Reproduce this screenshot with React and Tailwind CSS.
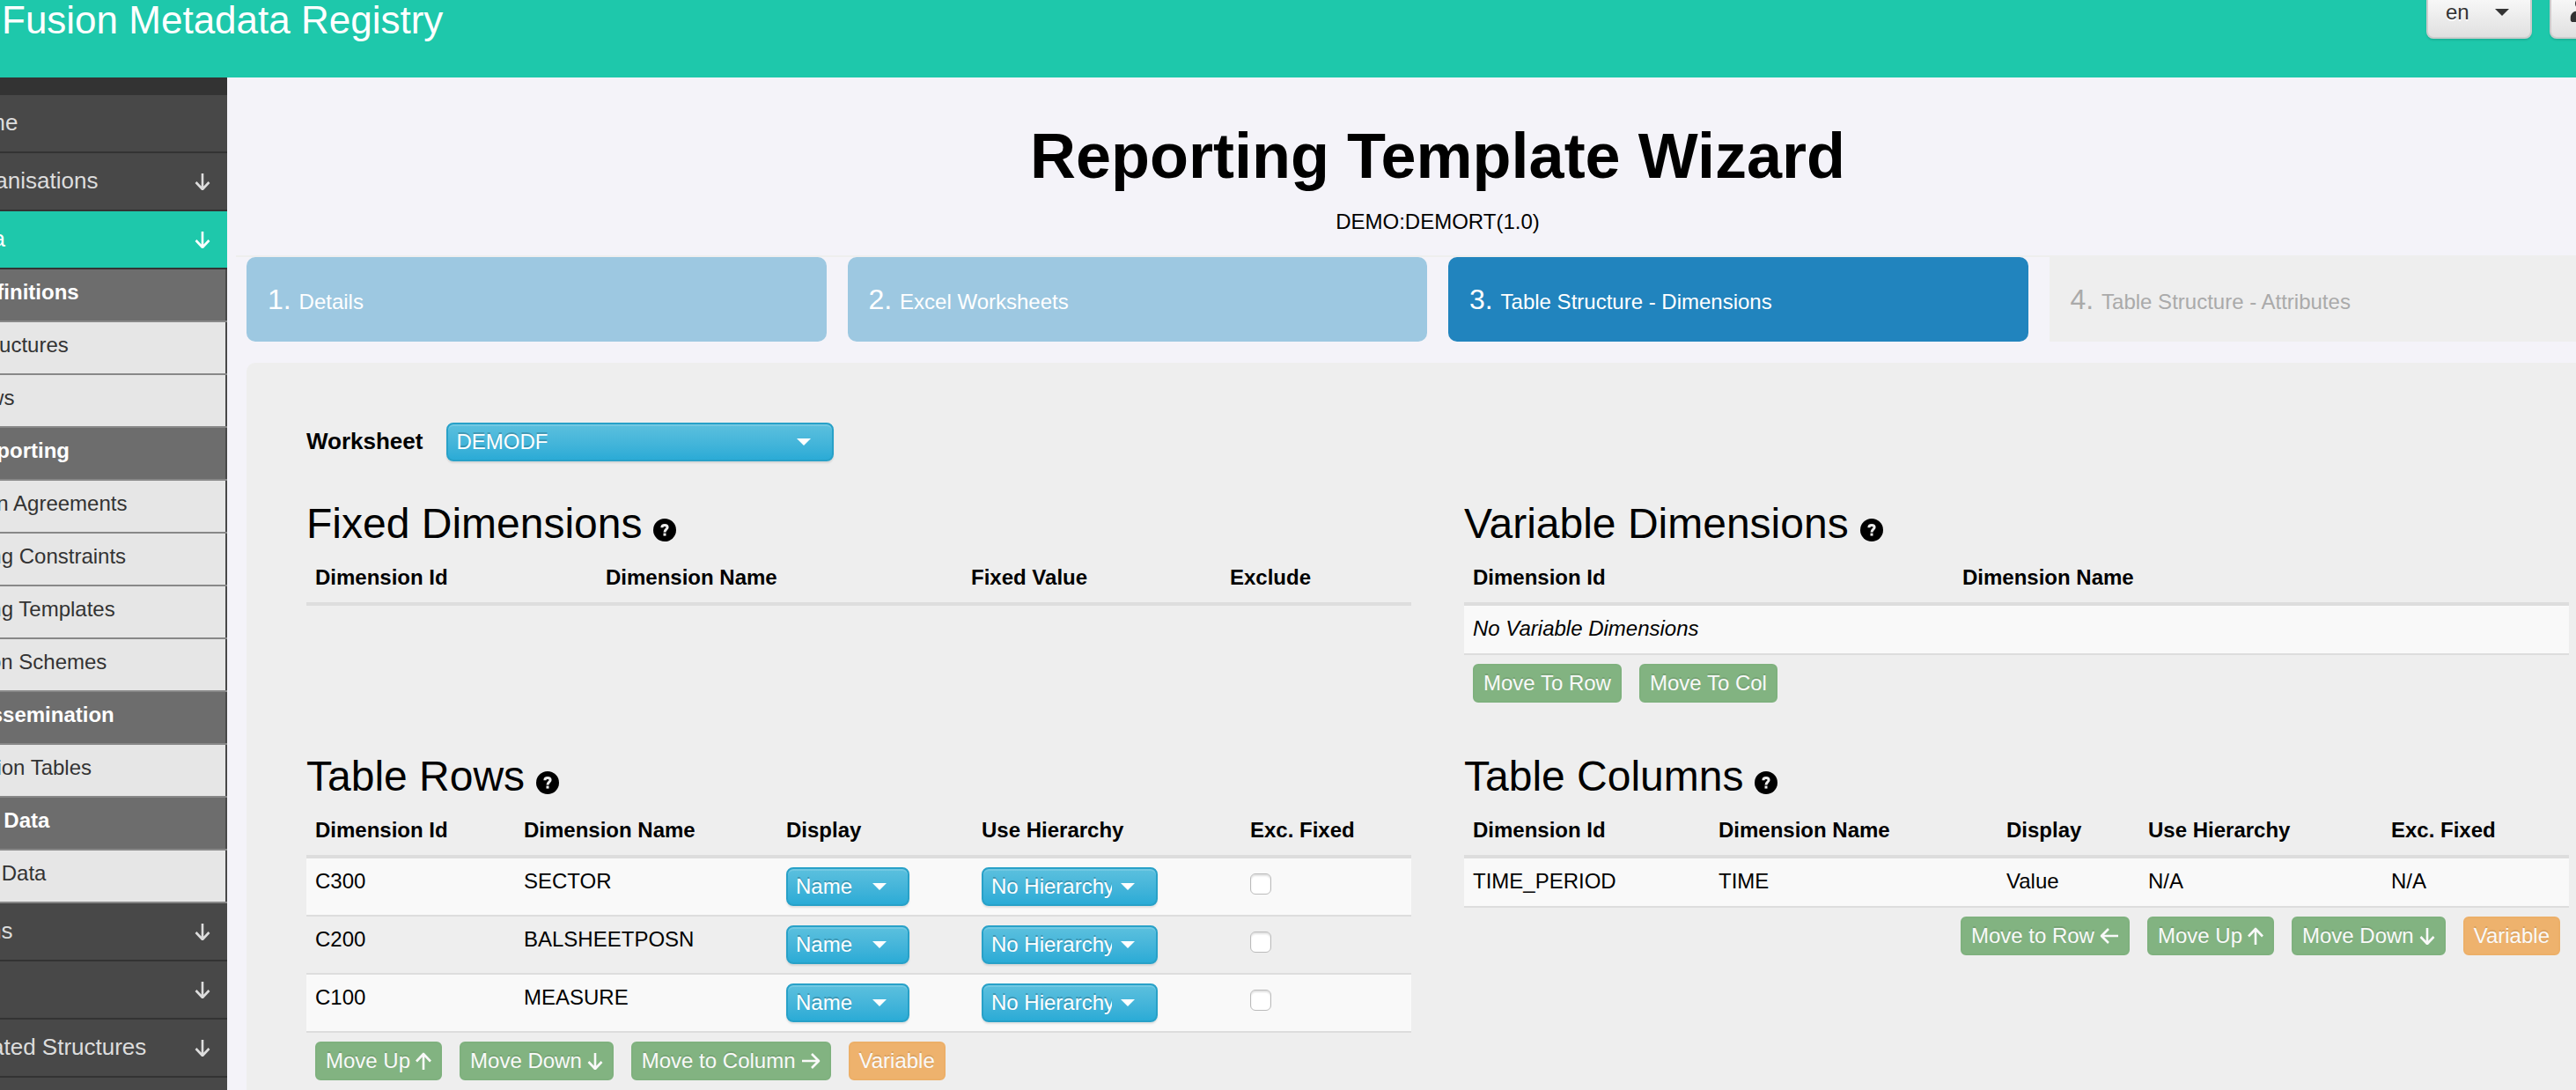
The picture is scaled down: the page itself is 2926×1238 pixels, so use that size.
import React, { useState } from "react";
import { FaUser } from "react-icons/fa";

const menu = [
  { label: "Home" },
  { label: "Organisations", arrow: true },
  { label: "Data", arrow: true, active: true },
  { label: "Data Definitions", heading: true },
  { label: "Data Structures", sub: true },
  { label: "Dataflows", sub: true },
  { label: "Data Reporting", heading: true },
  { label: "Provision Agreements", sub: true },
  { label: "Reporting Constraints", sub: true },
  { label: "Reporting Templates", sub: true },
  { label: "Validation Schemes", sub: true },
  { label: "Data Dissemination", heading: true },
  { label: "Publication Tables", sub: true },
  { label: "Convert Data", heading: true },
  { label: "Convert Data", sub: true },
  { label: "Items", arrow: true },
  { label: "", arrow: true },
  { label: "Related Structures", arrow: true },
];

const steps = [
  { label: "Details", style: "rounded-[10px] bg-[#9dc8e1] text-white" },
  { label: "Excel Worksheets", style: "rounded-[10px] bg-[#9dc8e1] text-white" },
  { label: "Table Structure - Dimensions", style: "rounded-[10px] bg-[#2184be] text-white" },
  { label: "Table Structure - Attributes", style: "bg-[#eeeeee] text-[#aaaaaa]" },
];

const rows = [
  { id: "C300", name: "SECTOR" },
  { id: "C200", name: "BALSHEETPOSN" },
  { id: "C100", name: "MEASURE" },
];

const arrows = {
  up: { box: "0 0 18 20", size: "h-5 w-[18px]", path: "M9 20V2M1 10.5L9 2L17 10.5" },
  down: { box: "0 0 18 20", size: "h-5 w-[18px]", path: "M9 1V19M1.5 11L9 19L16.5 11" },
  left: { box: "0 0 22 20", size: "h-5 w-[22px]", path: "M21 10H2M10 2L2 10L10 18" },
  right: { box: "0 0 22 20", size: "h-5 w-[22px]", path: "M1 10H20M12 2L20 10L12 18" },
};

function Arrow({ dir }) {
  const arrow = arrows[dir];
  return (
    <svg className={"shrink-0 " + arrow.size} viewBox={arrow.box} fill="none" stroke="currentColor" strokeWidth="2.6" strokeLinejoin="round" aria-hidden="true">
      <path d={arrow.path} />
    </svg>
  );
}

function HelpIcon() {
  return (
    <svg className="mb-2.5 size-[26px]" viewBox="0 0 26 26" aria-hidden="true">
      <circle cx="13" cy="13" r="13" fill="currentColor" />
      <path d="M9.9 10.2C9.9 8.2 11.2 7.5 13 7.5C14.9 7.5 16.1 8.4 16.1 9.9C16.1 12 13 12.2 13 15.4" fill="none" stroke="#eeeeee" strokeWidth="3" />
      <rect x="11.5" y="16.6" width="3" height="3" fill="#eeeeee" />
    </svg>
  );
}

function Caret({ className }) {
  return (
    <svg className={"pointer-events-none absolute right-[26px] h-2 w-4 " + className} viewBox="0 0 16 8" fill="currentColor" aria-hidden="true">
      <path d="M0 0H16L8 8Z" />
    </svg>
  );
}

function BlueSelect({ id, label, width, options }) {
  return (
    <div className={"relative flex items-center text-white " + width}>
      <select
        id={id}
        aria-label={label}
        className="h-11 w-full appearance-none overflow-hidden rounded-lg border-2 border-[#28a1c8] bg-linear-to-b from-[#5bc0de] to-[#2aabd6] pl-[9px] pr-[50px] text-2xl leading-8 shadow-[inset_0_2px_0_rgba(255,255,255,0.15),0_2px_2px_rgba(0,0,0,0.1)] text-shadow-[0_-2px_0_rgba(0,0,0,0.2)]"
      >
        {options.map((option) => (
          <option key={option}>{option}</option>
        ))}
      </select>
      <Caret className="text-white" />
    </div>
  );
}

function ActionButton({ children, dir, orange }) {
  const colors = orange ? "border-[#ecaf68] bg-[#eeb26d]" : "border-[#7fb17e] bg-[#82b381]";
  return (
    <button
      type="button"
      className={"flex h-11 items-center gap-1.5 whitespace-nowrap rounded-md border-2 px-2.5 text-2xl leading-8 text-[#f9f9f9] text-shadow-[0_-2px_0_rgba(0,0,0,0.1)] " + colors}
    >
      {children}
      {dir && <Arrow dir={dir} />}
    </button>
  );
}

function Heading({ children }) {
  return (
    <h2 className="mb-1 flex items-end gap-[13px] text-5xl leading-[60px]">
      {children}
      <HelpIcon />
    </h2>
  );
}

// columns: [title, width class]
function DimensionTable({ label, columns, children }) {
  return (
    <table aria-label={label} className="w-full table-fixed border-separate border-spacing-0 text-2xl leading-8">
      <thead>
        <tr>
          {columns.map(([title, width]) => (
            <th key={title} className={"border-b-4 border-[#dddddd] px-2.5 pt-[11px] pb-3 text-left font-bold " + width}>
              {title}
            </th>
          ))}
        </tr>
      </thead>
      <tbody>{children}</tbody>
    </table>
  );
}

function Cell({ children, colSpan }) {
  return (
    <td colSpan={colSpan} className="h-14 border-b-2 border-[#dddddd] px-2.5 py-2.5 align-top">
      {children}
    </td>
  );
}

function MenuItem({ item }) {
  if (item.heading) {
    return (
      <li className="flex h-15 items-center border-b-2 border-[#888888] bg-[#6d6d6d] pl-4 pb-1.5 text-2xl font-bold text-white shadow-[inset_-2px_0_0_#484848]">
        {item.label}
      </li>
    );
  }
  if (item.sub) {
    return (
      <li>
        <a href="#" className="flex h-15 items-center border-b-2 border-[#888888] bg-[#e6e6e6] pl-5 pb-1.5 text-2xl text-[#333333] shadow-[inset_-2px_0_0_#484848]">
          {item.label}
        </a>
      </li>
    );
  }
  return (
    <li>
      <a
        href="#"
        aria-label={item.label || "More"}
        className={"flex h-[66px] items-center justify-between border-b-2 border-[#333333] pl-15 pr-[19px] text-[26px] " + (item.active ? "bg-[#1ec8ab] text-white" : "bg-[#484848] text-[#dddddd]")}
      >
        <span className="pb-0.5">{item.label}</span>
        {item.arrow && <Arrow dir="down" />}
      </a>
    </li>
  );
}

function App() {
  const [excluded, setExcluded] = useState({});

  const toggleExcluded = (id) => {
    setExcluded({ ...excluded, [id]: !excluded[id] });
  };

  return (
    <div className="flex min-h-screen flex-col overflow-hidden bg-[#f4f3f9] font-['Liberation_Sans',Arial,sans-serif] text-black">
      <div className="-mt-6 -mr-[72px] -ml-[109px] flex flex-1 flex-col">
        <header className="flex h-28 items-start justify-between bg-[#1ec8ab]">
          <div className="pt-5 pl-[111px] text-[44px] leading-[54px] text-white">Fusion Metadata Registry</div>
          <div className="flex gap-5 pt-2 text-[#333333]">
            <div className="relative flex items-center">
              <select aria-label="Language" className="h-15 w-[120px] appearance-none rounded-lg border-2 border-[#cccccc] bg-linear-to-b from-white to-[#e0e0e0] pl-5 text-2xl shadow-[0_2px_2px_rgba(0,0,0,0.1)] text-shadow-[0_2px_0_#ffffff]">
                <option>en</option>
              </select>
              <Caret className="text-[#333333]" />
            </div>
            <button type="button" aria-label="User" className="flex h-15 w-[102px] items-center rounded-lg border-2 border-[#cccccc] bg-linear-to-b from-white to-[#e0e0e0] pl-5 shadow-[0_2px_2px_rgba(0,0,0,0.1)]">
              <FaUser className="mb-1.5 size-7" />
            </button>
          </div>
        </header>

        <div className="flex flex-1">
          <nav className="w-[367px] shrink-0 bg-[#484848]">
            <ul className="border-t-20 border-[#333333]">
              {menu.map((item, idx) => (
                <MenuItem key={idx} item={item} />
              ))}
            </ul>
          </nav>

          <main className="flex min-w-0 flex-1 flex-col pt-11 pl-2.5">
            <h1 className="text-center text-7xl leading-[90px] font-bold">Reporting Template Wizard</h1>
            <p className="mt-3.5 text-center text-2xl leading-8">DEMO:DEMORT(1.0)</p>

            <ol className="mt-[22px] grid grid-cols-4 gap-6 border-t-2 border-[#eeeeee] px-3">
              {steps.map((step, idx) => (
                <li key={step.label}>
                  <a href="#" className={"flex h-24 items-center px-6 text-2xl " + step.style}>
                    <span>
                      <span className="text-[32px]">{idx + 1}. </span>
                      {step.label}
                    </span>
                  </a>
                </li>
              ))}
            </ol>

            <div className="mx-3 mt-6 flex-1 rounded-t-[10px] bg-[#eeeeee] px-17 pt-17">
              <div className="flex items-center gap-[27px]">
                <label htmlFor="worksheet" className="pb-0.5 text-[26px] font-bold">Worksheet</label>
                <BlueSelect id="worksheet" width="w-[440px]" options={["DEMODF"]} />
              </div>

              <div className="mt-[41px] grid grid-cols-2 gap-x-15 gap-y-[54px]">
                <section>
                  <Heading>Fixed Dimensions</Heading>
                  <DimensionTable
                    label="Fixed Dimensions"
                    columns={[
                      ["Dimension Id", "w-[330px]"],
                      ["Dimension Name", "w-[415px]"],
                      ["Fixed Value", "w-[294px]"],
                      ["Exclude", "w-[216px]"],
                    ]}
                  />
                </section>

                <section>
                  <Heading>Variable Dimensions</Heading>
                  <DimensionTable
                    label="Variable Dimensions"
                    columns={[
                      ["Dimension Id", "w-[556px]"],
                      ["Dimension Name", "w-[699px]"],
                    ]}
                  >
                    <tr className="bg-[#f9f9f9]">
                      <Cell colSpan={2}>
                        <em>No Variable Dimensions</em>
                      </Cell>
                    </tr>
                  </DimensionTable>
                  <div className="flex gap-5 px-2.5 pt-2.5">
                    <ActionButton>Move To Row</ActionButton>
                    <ActionButton>Move To Col</ActionButton>
                  </div>
                </section>

                <section>
                  <Heading>Table Rows</Heading>
                  <DimensionTable
                    label="Table Rows"
                    columns={[
                      ["Dimension Id", "w-[237px]"],
                      ["Dimension Name", "w-[298px]"],
                      ["Display", "w-[222px]"],
                      ["Use Hierarchy", "w-[305px]"],
                      ["Exc. Fixed", "w-[193px]"],
                    ]}
                  >
                    {rows.map((row) => (
                      <tr key={row.id} className="odd:bg-[#f9f9f9]">
                        <Cell>{row.id}</Cell>
                        <Cell>{row.name}</Cell>
                        <Cell>
                          <BlueSelect label={"Display " + row.id} width="w-[140px]" options={["Name"]} />
                        </Cell>
                        <Cell>
                          <BlueSelect label={"Use Hierarchy " + row.id} width="w-[200px]" options={["No Hierarchy"]} />
                        </Cell>
                        <Cell>
                          <input
                            type="checkbox"
                            aria-label={"Exc. Fixed " + row.id}
                            checked={!!excluded[row.id]}
                            onChange={() => toggleExcluded(row.id)}
                            className="mt-[7px] block size-6 appearance-none rounded-md border border-[#bbbbbb] bg-white shadow-[inset_0_2px_2px_rgba(0,0,0,0.12)] checked:bg-[#2aabd6]"
                          />
                        </Cell>
                      </tr>
                    ))}
                  </DimensionTable>
                  <div className="flex gap-5 px-2.5 pt-2.5">
                    <ActionButton dir="up">Move Up</ActionButton>
                    <ActionButton dir="down">Move Down</ActionButton>
                    <ActionButton dir="right">Move to Column</ActionButton>
                    <ActionButton orange>Variable</ActionButton>
                  </div>
                </section>

                <section>
                  <Heading>Table Columns</Heading>
                  <DimensionTable
                    label="Table Columns"
                    columns={[
                      ["Dimension Id", "w-[279px]"],
                      ["Dimension Name", "w-[327px]"],
                      ["Display", "w-[161px]"],
                      ["Use Hierarchy", "w-[276px]"],
                      ["Exc. Fixed", "w-[212px]"],
                    ]}
                  >
                    <tr className="bg-[#f9f9f9]">
                      <Cell>TIME_PERIOD</Cell>
                      <Cell>TIME</Cell>
                      <Cell>Value</Cell>
                      <Cell>N/A</Cell>
                      <Cell>N/A</Cell>
                    </tr>
                  </DimensionTable>
                  <div className="flex justify-end gap-5 px-2.5 pt-2.5">
                    <ActionButton dir="left">Move to Row</ActionButton>
                    <ActionButton dir="up">Move Up</ActionButton>
                    <ActionButton dir="down">Move Down</ActionButton>
                    <ActionButton orange>Variable</ActionButton>
                  </div>
                </section>
              </div>
            </div>
          </main>
        </div>
      </div>
    </div>
  );
}

export default App;
